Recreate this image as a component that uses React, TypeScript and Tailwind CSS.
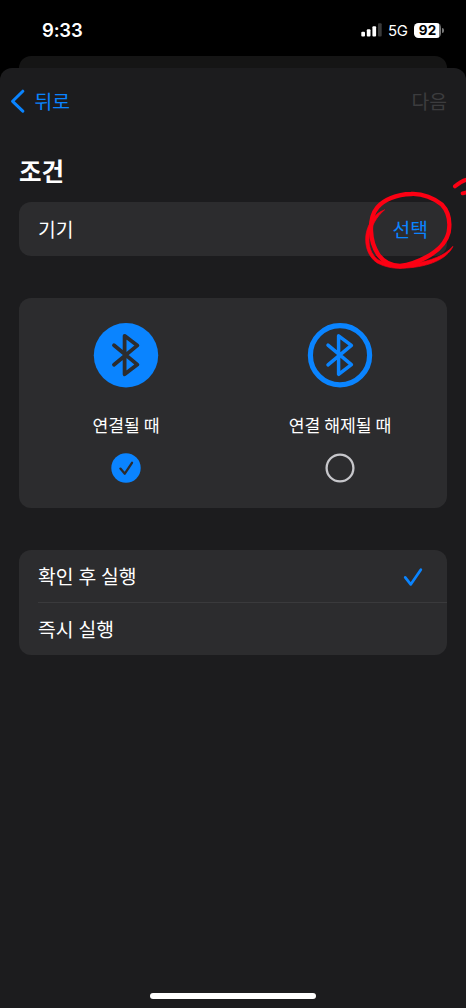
import type { ReactNode } from 'react';

function BluetoothIcon({ filled }: { filled: boolean }) {
  return (
    <svg className="block size-[66px]" viewBox="-1 -1 66 66" fill="none">
      {filled ? (
        <circle cx="32" cy="32.2" r="32.2" fill="#0a84ff" />
      ) : (
        <circle cx="32" cy="32.2" r="29.6" stroke="#0a84ff" strokeWidth="5.2" />
      )}
      <path
        d="M20 22.2 L43.4 41.6 L30.6 51.3 V12.8 L43.4 22.4 L20 41.8"
        stroke={filled ? '#2c2c2e' : '#0a84ff'}
        strokeWidth={filled ? 3.8 : 3.5}
        strokeLinecap="round"
        strokeLinejoin="round"
      />
    </svg>
  );
}

function Option({ label, selected }: { label: string; selected: boolean }) {
  return (
    <div className="flex w-1/2 flex-col items-center pt-6">
      <BluetoothIcon filled={selected} />
      <div className="mt-[24px] h-[26px] text-[17.2px] leading-[26px] font-normal whitespace-nowrap">{label}</div>
      <svg className="mt-[15px] block size-[30px]" viewBox="0 0 30 30" fill="none">
        {selected ? (
          <>
            <circle cx="15" cy="15" r="14.7" fill="#0a84ff" />
            <path d="M9.4 15.6 L13.8 20.7 L21 9.8" stroke="#2c2c2e" strokeWidth="2.3" strokeLinecap="round" strokeLinejoin="round" />
          </>
        ) : (
          <circle cx="15" cy="15" r="13.4" stroke="#c7c7cb" strokeWidth="2.3" />
        )}
      </svg>
    </div>
  );
}

function Card({ children, className }: { children: ReactNode; className: string }) {
  return <section className={`mx-[19px] rounded-[12px] bg-[#2c2c2e] ${className}`}>{children}</section>;
}

function StatusBar() {
  return (
    <header className="flex h-14 items-start justify-between pt-[19px] pr-[22px] pl-[42px] font-['Inter','Liberation_Sans',sans-serif]">
      <span className="text-[18.5px] leading-[22px] font-semibold tracking-[-0.2px]">9:33</span>
      <div className="flex h-[22px] items-center">
        <svg className="block h-[14px] w-[21px]" viewBox="0 0 21 14">
          <rect x="0.3" y="8.7" width="3.7" height="4.9" rx="1" fill="#fff" />
          <rect x="5.8" y="6.2" width="3.7" height="7.4" rx="1" fill="#fff" />
          <rect x="11.4" y="3.2" width="3.7" height="10.4" rx="1" fill="#fff" />
          <rect x="17" y="0.2" width="3.7" height="13.4" rx="1" fill="#3a3a3a" />
        </svg>
        <span className="ml-[6px] w-[26px] pt-px text-[15px] leading-[22px] font-normal tracking-[-0.3px]">5G</span>
        <div className="flex h-[15px] w-[27px] items-center justify-center rounded-[4.5px] bg-[linear-gradient(90deg,#fff_93%,#777_93%)] text-[13.5px] leading-[15px] font-bold text-black">92</div>
        <div className="ml-px h-[5px] w-[2px] rounded-r-full bg-[#777]" />
      </div>
    </header>
  );
}

function Scribble() {
  return (
    <svg className="pointer-events-none absolute top-[165px] left-[346px] h-[110px] w-[120px]" viewBox="0 0 360 330" fill="none" stroke="#fc0013" strokeLinecap="round" strokeLinejoin="round">
      <path strokeWidth="13" d="M195 87 C230 85 266 100 288 119 C308 140 313 172 308 202 C301 231 276 258 242 276 C217 290 190 300 162 303 C134 302 111 289 97 269 C82 247 76 225 75 197 C74 170 79 145 94 127 C113 104 151 88 195 87Z" />
      <path fill="#fc0013" strokeWidth="2" d="M115 135 C88 143 66 174 60 208 C55 245 68 277 94 294 C118 307 151 313 182 309 C246 305 302 284 321 244 C295 273 255 286 207 296 C163 302 126 302 99 286 C74 269 66 241 70 211 C76 185 91 155 115 135Z" />
      <path strokeWidth="12" d="M327 64 C337 55 347 48 362 44 M350 85 L362 82" />
    </svg>
  );
}

export default function App() {
  return (
    <div className="relative flex h-[1008px] w-[466px] flex-col overflow-hidden bg-black font-['Noto_Sans_CJK_KR',sans-serif] text-white">
      <StatusBar />
      <div className="mx-[19px] h-3 shrink-0 rounded-t-[12px] bg-[#151515]" />
      <main className="flex grow flex-col rounded-t-[12px] bg-[#1c1c1e]">
        <nav className="flex h-[66px] items-center justify-between pr-[19px] pl-[10px] text-[19.3px] leading-7">
          <div className="flex items-center text-[#0a84ff]">
            <svg className="mr-[9.5px] block h-6 w-[15px]" viewBox="0 0 15 24" fill="none">
              <path d="M12.8 2.2 L2.6 12.3 L12.8 22.2" stroke="currentColor" strokeWidth="3" strokeLinecap="round" strokeLinejoin="round" />
            </svg>
            <span>뒤로</span>
          </div>
          <span className="text-[#3c3c3e]">다음</span>
        </nav>
        <h1 className="mt-[18px] ml-[19px] h-[50px] text-[24.5px] leading-[38px] font-bold">조건</h1>
        <Card className="flex h-[54px] shrink-0 items-center justify-between px-[19px] text-[19.3px] leading-7">
          <span>기기</span>
          <span className="text-[#0a84ff]">선택</span>
        </Card>
        <Card className="mt-[42px] flex h-[210px] shrink-0">
          <Option label="연결될 때" selected />
          <Option label="연결 해제될 때" selected={false} />
        </Card>
        <Card className="mt-[42px] h-[105px] shrink-0 pl-[19px] text-[19.3px] leading-7 [word-spacing:0.6px]">
          <div className="flex h-[53px] items-center justify-between border-b border-[#3a3a3c] pr-[24px]">
            <span>확인 후 실행</span>
            <svg className="mt-px block h-[20px] w-5" viewBox="0 0 20 20" fill="none">
              <path d="M2.2 10.4 L7.7 17.4 L17.8 2.7" stroke="#0a84ff" strokeWidth="2.7" strokeLinecap="round" strokeLinejoin="round" />
            </svg>
          </div>
          <div className="flex h-[52px] items-center">즉시 실행</div>
        </Card>
        <div className="mx-auto mt-auto mb-[9.5px] h-[6px] w-[166px] rounded-full bg-white" />
      </main>
      <Scribble />
    </div>
  );
}
